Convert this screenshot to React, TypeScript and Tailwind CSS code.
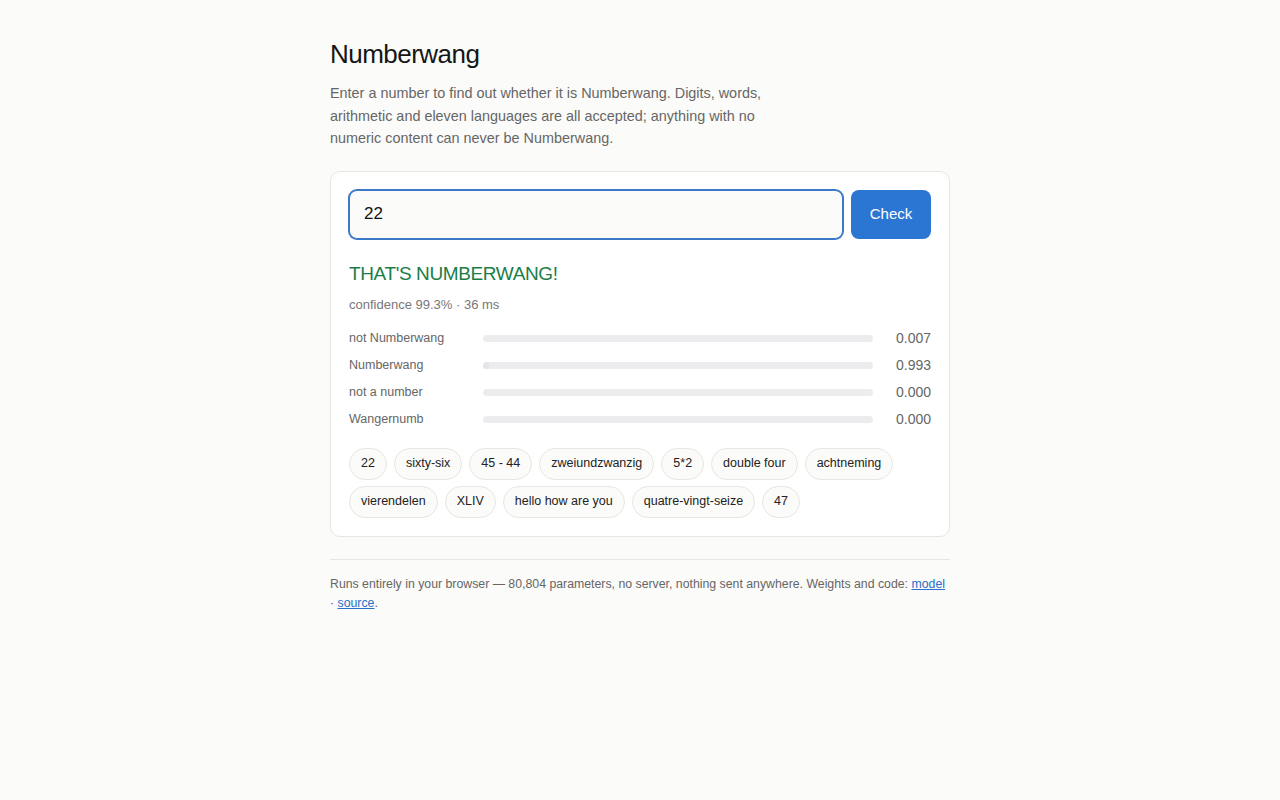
const probs = [
  { label: "not Numberwang", value: 0.007 },
  { label: "Numberwang", value: 0.993 },
  { label: "not a number", value: 0.0 },
  { label: "Wangernumb", value: 0.0 },
];

const examples = [
  "22",
  "sixty-six",
  "45 - 44",
  "zweiundzwanzig",
  "5*2",
  "double four",
  "achtneming",
  "vierendelen",
  "XLIV",
  "hello how are you",
  "quatre-vingt-seize",
  "47",
];

export default function App() {
  return (
    <div className="min-h-screen bg-[#fbfbf9] font-['Liberation_Sans',Arial,sans-serif] text-[#1a1a1a]">
      <main className="mx-auto w-[620px] pt-9">
        <h1 className="text-[26px] leading-[36px] font-normal tracking-[-0.02em] text-[#161616]">
          Numberwang
        </h1>
        <p className="mt-2.5 max-w-[440px] text-[14.4px] leading-[22.5px] text-[#666]">
          Enter a number to find out whether it is Numberwang. Digits, words,
          arithmetic and eleven languages are all accepted; anything with no
          numeric content can never be Numberwang.
        </p>

        <section className="mt-[21px] rounded-[10px] border border-[#e6e6e3] bg-white p-[18px]">
          <div className="flex gap-2">
            <input
              defaultValue="22"
              className="h-[49px] flex-1 rounded-lg border border-[#3a78c8] bg-[#fbfbf9] px-[14px] text-[17px] text-[#111] shadow-[0_0_0_1px_#3a78c8] outline-none"
            />
            <button className="h-[49px] w-20 rounded-lg bg-[#2b76d3] text-[15px] text-white">
              Check
            </button>
          </div>

          <div className="mt-[21px] text-[19px] leading-[28px] tracking-[-0.02em] text-[#1b7d47]">
            THAT'S NUMBERWANG!
          </div>
          <div className="mt-2 text-[13px] leading-[18px] text-[#777]">
            confidence 99.3% · 36 ms
          </div>

          <div className="mt-[14px] flex flex-col gap-[9px]">
            {probs.map((p) => (
              <div key={p.label} className="grid h-[18px] grid-cols-[122px_1fr_46px] items-center gap-3 text-[12.5px] text-[#666]">
                <span>{p.label}</span>
                <div className="h-[7px] overflow-hidden rounded-full bg-[#ececee]">
                  <div className="h-full rounded-full bg-[#e4e4e8]" style={{ width: `${p.value * 1.5}%` }} />
                </div>
                <span className="text-right text-[14px]">{p.value.toFixed(3)}</span>
              </div>
            ))}
          </div>

          <div className="mt-[21px] flex flex-wrap gap-x-[7px] gap-y-[6px]">
            {examples.map((ex) => (
              <button
                key={ex}
                className="h-8 rounded-full border border-[#e6e6e3] bg-[#fbfbf9] px-[11px] text-[12.5px] text-[#222]"
              >
                {ex}
              </button>
            ))}
          </div>
        </section>

        <footer className="mt-[22px] border-t border-[#e6e6e3] pt-[15px] text-[12.3px] leading-[19px] text-[#666]">
          Runs entirely in your browser — 80,804 parameters, no server, nothing sent anywhere. Weights and code:{" "}
          <a href="#" className="text-[#2a6fc9] underline">model</a> ·{" "}
          <a href="#" className="text-[#2a6fc9] underline">source</a>.
        </footer>
      </main>
    </div>
  );
}
